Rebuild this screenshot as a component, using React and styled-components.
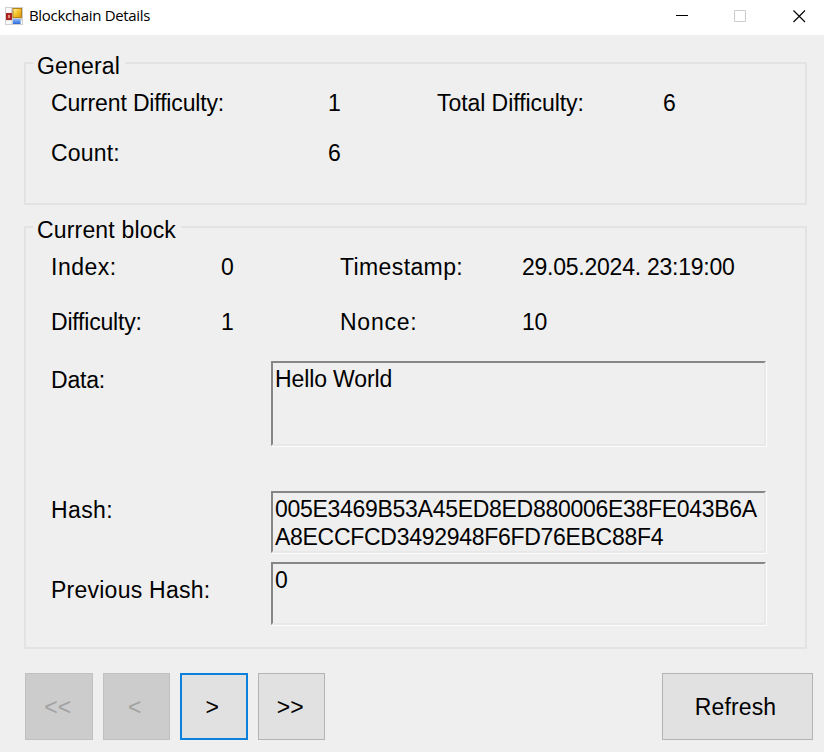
import React from "react";
import styled, { createGlobalStyle } from "styled-components";

const GlobalStyle = createGlobalStyle`
  * { box-sizing: border-box; }
  body { margin: 0; background: #efefef; }
`;

const Window = styled.div`
  width: 824px;
  height: 752px;
  overflow: hidden;
  background: #efefef;
  color: #000;
  font: 23px/28px "Liberation Sans", Arial, sans-serif;
`;

const TitleBar = styled.header`
  display: flex;
  align-items: center;
  height: 35px;
  padding: 0 18px 3px 5px;
  background: #fff;
`;

const Caption = styled.h1`
  flex: 1;
  margin: -2px 0 0 6px;
  font: 400 15px/20px "Open Sans", "Noto Sans", sans-serif;
  letter-spacing: -0.32px;
`;

const Controls = styled.div`
  display: flex;
  gap: 45px;
`;

const Glyph = styled.svg`
  display: block;
  width: 13px;
  height: 13px;
  margin-right: ${(p) => p.$space || 0}px;
  fill: none;
  stroke: ${(p) => p.$color || "#000"};
  stroke-width: ${(p) => p.$weight || 1};
`;

const AppIcon = styled.svg`
  display: block;
  width: 18px;
  height: 18px;
`;

const Content = styled.main`
  padding: 16px 11px 0 24px;
`;

const Group = styled.fieldset`
  width: 783px;
  height: ${(p) => p.$height}px;
  margin: 0 0 ${(p) => p.$gap}px;
  padding: ${(p) => p.$top}px 0 0 25px;
  border: 2px solid #e3e3e3;
`;

const Legend = styled.legend`
  height: 24px;
  margin-left: -18px;
  padding: 5px 5px 0 4px;
  line-height: 20px;
  letter-spacing: ${(p) => p.$track || 0}px;
`;

const Row = styled.div`
  display: grid;
  grid-template-columns: ${(p) => p.$columns};
  margin-bottom: ${(p) => p.$gap}px;
`;

const Label = styled.span`
  padding-top: ${(p) => p.$drop || 0}px;
  white-space: nowrap;
  letter-spacing: ${(p) => p.$track || 0}px;
`;

const Field = styled.div`
  width: 495px;
  height: ${(p) => p.$height}px;
  padding: 3px 0 0 2px;
  border: 2px solid #868686;
  border-right-color: #e8e8e8;
  border-bottom-color: #e8e8e8;
  box-shadow: 1px 1px 0 #fcfcfc;
  line-height: 27.5px;
  letter-spacing: ${(p) => p.$track || 0}px;
  word-break: break-all;
`;

const Footer = styled.footer`
  display: flex;
  gap: 10px;
  padding-left: 1px;
`;

const Button = styled.button`
  width: ${(p) => p.$width || 67.5}px;
  height: 67px;
  padding: 0 ${(p) => p.$shift || 0}px 0 0;
  border: ${(p) => (p.$focused ? "2.5px solid #0c80db" : "1.5px solid #b4b4b4")};
  border-radius: 0;
  background: #e1e1e1;
  color: #000;
  font: inherit;
  letter-spacing: ${(p) => p.$track || 0}px;
  &:disabled {
    border-color: #c0c0c0;
    background: #cccccc;
    color: #a2a2a2;
  }
  &:last-child {
    margin-left: auto;
  }
`;

function FormIcon() {
  return (
    <AppIcon viewBox="0 0 18 18" aria-hidden="true">
      <defs>
        <linearGradient id="gold" x2="1" y2="1">
          <stop stopColor="#fff1a0" />
          <stop offset=".45" stopColor="#f6c52e" />
          <stop offset="1" stopColor="#d79a10" />
        </linearGradient>
        <linearGradient id="sky" x2="0" y2="1">
          <stop stopColor="#8cbaf8" />
          <stop offset="1" stopColor="#2c68d8" />
        </linearGradient>
      </defs>
      <rect width="18" height="18" fill="#cfcfcf" />
      <path d="M1 1h5v5H1zM1 13.5h5.5V17H1zM15.5 13.5H17V17h-1.5z" fill="#fafafa" />
      <rect x="1" y="6" width="6" height="7" fill="#a92323" />
      <rect x="3" y="8" width="2" height="3" fill="#e28e80" />
      <rect x="7.5" y="1" width="9.5" height="10" fill="#b98218" />
      <rect x="8.5" y="2" width="7.5" height="8" fill="url(#gold)" />
      <rect x="8" y="12" width="7.5" height="5" fill="url(#sky)" />
    </AppIcon>
  );
}

export default function App() {
  return (
    <Window>
      <GlobalStyle />
      <TitleBar>
        <FormIcon />
        <Caption>Blockchain Details</Caption>
        <Controls>
          <Glyph viewBox="0 0 13 13"><path d="M0 5.5h12" /></Glyph>
          <Glyph viewBox="0 0 13 13" $color="#cccccc" $space={1}><path d="M.5.5h11v11H.5z" /></Glyph>
          <Glyph viewBox="0 0 13 13" $weight={1.1}><path d="M.5.5l11.5 11.5M12 .5L.5 12" /></Glyph>
        </Controls>
      </TitleBar>
      <Content>
        <Group $height={154} $gap={10} $top={14}>
          <Legend $track={0.17}>General</Legend>
          <Row $columns="277px 109px 226px auto" $gap={22}>
            <Label $track={-0.15}>Current Difficulty:</Label>
            <Label>1</Label>
            <Label $track={-0.06}>Total Difficulty:</Label>
            <Label>6</Label>
          </Row>
          <Row $columns="277px auto" $gap={0}>
            <Label $track={0.2}>Count:</Label>
            <Label>6</Label>
          </Row>
        </Group>
        <Group $height={434} $gap={24} $top={14}>
          <Legend $track={0.17}>Current block</Legend>
          <Row $columns="170px 119px 182px auto" $gap={27}>
            <Label $track={0.5}>Index:</Label>
            <Label>0</Label>
            <Label $track={0.38}>Timestamp:</Label>
            <Label $track={-0.24}>29.05.2024. 23:19:00</Label>
          </Row>
          <Row $columns="170px 119px 182px auto" $gap={25}>
            <Label $track={-0.2}>Difficulty:</Label>
            <Label>1</Label>
            <Label $track={0.75}>Nonce:</Label>
            <Label $track={-0.2}>10</Label>
          </Row>
          <Row $columns="220px auto" $gap={45}>
            <Label $drop={5} $track={-0.2}>Data:</Label>
            <Field $height={85} $track={-0.12}>Hello World</Field>
          </Row>
          <Row $columns="220px auto" $gap={9}>
            <Label $drop={5} $track={0.4}>Hash:</Label>
            <Field $height={62} $track={-0.29}>
              005E3469B53A45ED8ED880006E38FE043B6AA8ECCFCD3492948F6FD76EBC88F4
            </Field>
          </Row>
          <Row $columns="220px auto" $gap={0}>
            <Label $drop={14} $track={0.24}>Previous Hash:</Label>
            <Field $height={63}>0</Field>
          </Row>
        </Group>
        <Footer>
          <Button disabled $shift={2}>&lt;&lt;</Button>
          <Button disabled $shift={3}>&lt;</Button>
          <Button $focused $shift={3}>&gt;</Button>
          <Button $shift={2}>&gt;&gt;</Button>
          <Button $width={151} $shift={4} $track={0.15}>Refresh</Button>
        </Footer>
      </Content>
    </Window>
  );
}
